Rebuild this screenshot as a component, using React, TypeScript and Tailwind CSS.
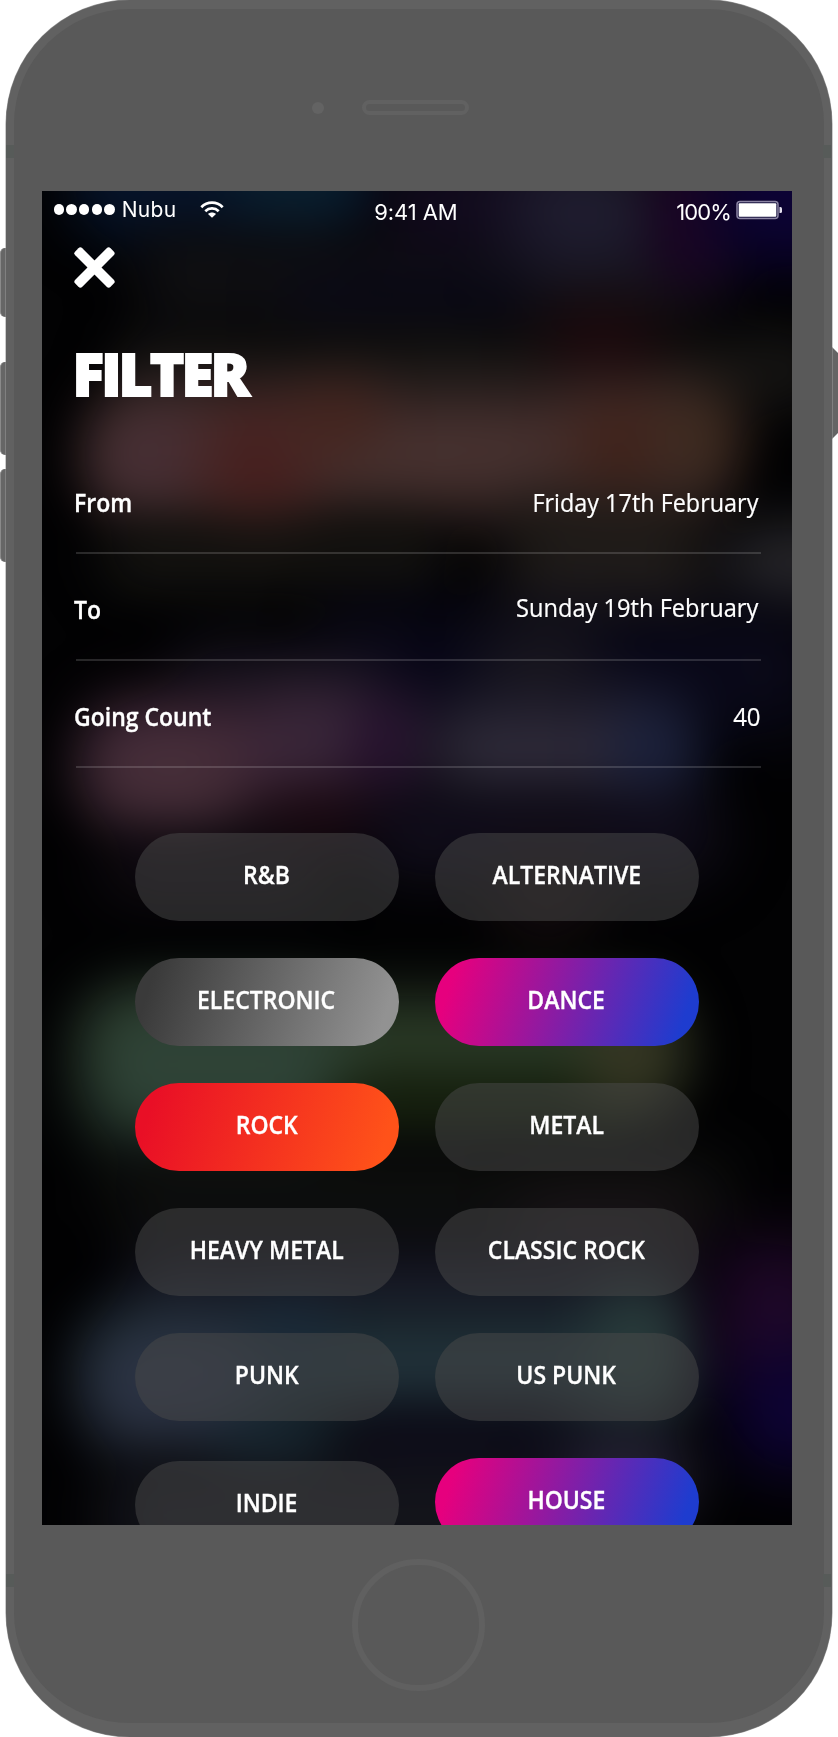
type Filter = { label: string; value: string; valueClass: string };

const filters: Filter[] = [
  { label: "From", value: "Friday 17th February", valueClass: "mt-[41px] mr-[2px] scale-x-[0.936]" },
  { label: "To", value: "Sunday 19th February", valueClass: "mt-[39px] mr-[2px] scale-x-[0.945]" },
  { label: "Going Count", value: "40", valueClass: "mt-[41px] scale-x-[0.960]" },
];

const PLAIN = "bg-[#4a4a4a]/50";
const GREY = "bg-[linear-gradient(108deg,#3a3a3a_8%,#929292_92%)]";
const PINK = "bg-[linear-gradient(108deg,#e6007e_8%,#1e3ccf_92%)]";
const RED = "bg-[linear-gradient(108deg,#e90f26_8%,#ff5219_92%)]";

const leftGenres = [
  { name: "R&B", fill: PLAIN },
  { name: "ELECTRONIC", fill: GREY },
  { name: "ROCK", fill: RED },
  { name: "HEAVY METAL", fill: PLAIN },
  { name: "PUNK", fill: PLAIN },
  { name: "INDIE", fill: `${PLAIN} mt-[3px]` },
];

const rightGenres = [
  { name: "ALTERNATIVE", fill: PLAIN },
  { name: "DANCE", fill: PINK },
  { name: "METAL", fill: PLAIN },
  { name: "CLASSIC ROCK", fill: PLAIN },
  { name: "US PUNK", fill: PLAIN },
  { name: "HOUSE", fill: PINK },
];

/* Soft colour spots behind the content, placed in screen coordinates. */
const glows = [
  "left-[30px] top-[-70px] w-[300px] h-[120px] bg-[#07142a] blur-[24px]",
  "left-[190px] top-[-60px] w-[130px] h-[100px] bg-[#0a2030] blur-[24px]",
  "left-[90px] top-[40px] w-[610px] h-[90px] bg-[#101013] blur-[26px]",
  "left-[240px] top-[85px] w-[260px] h-[50px] bg-[#0a0918] blur-[26px]",
  "left-[340px] top-[-40px] w-[220px] h-[100px] bg-[#120b1e] blur-[24px]",
  "left-[470px] top-[-40px] w-[170px] h-[130px] bg-[#201e30] blur-[34px]",
  "left-[610px] top-[-50px] w-[80px] h-[150px] bg-[#1c0524] blur-[24px]",
  "left-[670px] top-[-80px] w-[160px] h-[155px] bg-[#0c0334] blur-[28px]",
  "left-[70px] top-[140px] w-[720px] h-[80px] bg-[#151413] blur-[22px]",
  "left-[500px] top-[110px] w-[120px] h-[90px] bg-[#1e0b0f] blur-[28px]",
  "left-[50px] top-[200px] w-[630px] h-[125px] bg-[#46312f] blur-[26px]",
  "left-[55px] top-[220px] w-[120px] h-[95px] bg-[#472f35] blur-[26px]",
  "left-[160px] top-[215px] w-[110px] h-[130px] bg-[#482120] blur-[28px]",
  "left-[250px] top-[195px] w-[90px] h-[65px] bg-[#46241d] blur-[26px]",
  "left-[530px] top-[205px] w-[100px] h-[115px] bg-[#42241c] blur-[28px]",
  "left-[620px] top-[200px] w-[75px] h-[95px] bg-[#3f2c20] blur-[26px]",
  "left-[60px] top-[330px] w-[350px] h-[70px] bg-[#151411] blur-[24px]",
  "left-[460px] top-[305px] w-[210px] h-[140px] bg-[#211d1a] blur-[30px]",
  "left-[680px] top-[335px] w-[140px] h-[80px] bg-[#29282c] blur-[26px]",
  "left-[280px] top-[415px] w-[500px] h-[130px] bg-[#0a0919] blur-[30px]",
  "left-[130px] top-[455px] w-[220px] h-[70px] bg-[#171420] blur-[28px]",
  "left-[440px] top-[430px] w-[120px] h-[80px] bg-[#19171e] blur-[28px]",
  "left-[45px] top-[510px] w-[270px] h-[110px] bg-[#41283a] blur-[28px]",
  "left-[50px] top-[540px] w-[160px] h-[95px] bg-[#472f39] blur-[28px]",
  "left-[220px] top-[505px] w-[130px] h-[95px] bg-[#3a283b] blur-[28px]",
  "left-[310px] top-[505px] w-[80px] h-[110px] bg-[#2a1432] blur-[26px]",
  "left-[385px] top-[512px] w-[240px] h-[100px] bg-[#302c3b] blur-[28px]",
  "left-[570px] top-[510px] w-[85px] h-[110px] bg-[#1c2340] blur-[28px]",
  "left-[210px] top-[600px] w-[130px] h-[55px] bg-[#1c0a12] blur-[26px]",
  "left-[320px] top-[605px] w-[360px] h-[80px] bg-[#120e1d] blur-[28px]",
  "left-[60px] top-[650px] w-[220px] h-[55px] bg-[#120c14] blur-[26px]",
  "left-[450px] top-[660px] w-[110px] h-[90px] bg-[#140c0e] blur-[26px]",
  "left-[50px] top-[805px] w-[580px] h-[100px] bg-[#2c3c28] blur-[28px]",
  "left-[45px] top-[808px] w-[260px] h-[148px] bg-[#2f4337] blur-[30px]",
  "left-[290px] top-[885px] w-[310px] h-[55px] bg-[#18230f] blur-[24px]",
  "left-[545px] top-[805px] w-[90px] h-[115px] bg-[#363623] blur-[26px]",
  "left-[60px] top-[965px] w-[640px] h-[80px] bg-[#0f100f] blur-[28px]",
  "left-[470px] top-[1000px] w-[190px] h-[85px] bg-[#1a1417] blur-[28px]",
  "left-[80px] top-[1055px] w-[560px] h-[80px] bg-[#171724] blur-[26px]",
  "left-[50px] top-[1120px] w-[590px] h-[110px] bg-[#22333b] blur-[28px]",
  "left-[45px] top-[1135px] w-[180px] h-[125px] bg-[#2c3344] blur-[28px]",
  "left-[210px] top-[1110px] w-[80px] h-[70px] bg-[#1a2a3a] blur-[26px]",
  "left-[550px] top-[1095px] w-[100px] h-[125px] bg-[#2a3d3c] blur-[28px]",
  "left-[170px] top-[1225px] w-[130px] h-[60px] bg-[#1a2d38] blur-[24px]",
  "left-[300px] top-[1220px] w-[230px] h-[80px] bg-[#0d0b1a] blur-[26px]",
  "left-[670px] top-[1050px] w-[130px] h-[150px] bg-[#20082a] blur-[32px]",
  "left-[690px] top-[1160px] w-[130px] h-[120px] bg-[#0e0336] blur-[30px]",
  "left-[510px] top-[1240px] w-[140px] h-[90px] bg-[#252236] blur-[26px]",
  "left-[60px] top-[1270px] w-[440px] h-[110px] bg-[#14151c] blur-[28px]",
];

function Genre({ name, fill }: { name: string; fill: string }) {
  return (
    <button className={`flex h-[88px] w-[264px] shrink-0 items-center justify-center rounded-full pb-[6px] ${fill}`}>
      <span className="block scale-x-[0.92] text-[25px] leading-7 font-semibold whitespace-nowrap [-webkit-text-stroke:0.35px_white]">
        {name}
      </span>
    </button>
  );
}

function StatusBar() {
  return (
    <div className="flex h-14 items-start pl-[12px] font-['Inter',sans-serif] text-[22px] leading-6">
      <div className="mt-[13px] flex gap-[2.2px]">
        {[0, 1, 2, 3, 4].map((i) => (
          <span key={i} className="size-[10.5px] rounded-full bg-white" />
        ))}
      </div>
      <span className="mt-[7px] ml-[7px] w-[60px] text-[21px] tracking-[0.3px]">Nubu</span>
      <svg className="mt-[9.5px] ml-[18.5px] h-[18px] w-6" viewBox="0 0 24 18" fill="none" stroke="#fff" strokeWidth="2.7">
        <path d="M1.3 6.2C7.3.2 16.7.2 22.7 6.2" />
        <path d="M5.3 10.2C9.1 6.5 14.9 6.5 18.7 10.2" />
        <path d="M12 16.8L8 12.9C10.3 10.9 13.7 10.9 16 12.9Z" fill="#fff" stroke="none" />
      </svg>
      <span className="mt-[9px] ml-[150px] w-[90px] tracking-[-0.1px] whitespace-nowrap">9:41 AM</span>
      <span className="mt-[9px] ml-[212px] w-[60px] tracking-[-0.9px]">100%</span>
      <svg className="mt-[9px] h-5 w-[46px] shrink-0" viewBox="0 0 46 20">
        <rect x="1" y="1.5" width="41" height="17" rx="3" fill="#1a1440" stroke="#8b84a3" strokeWidth="1.5" />
        <rect x="2.7" y="3.2" width="37.6" height="13.6" rx="1" fill="#fff" />
        <path d="M43.5 7H44.5Q46 7 46 8.5V11.5Q46 13 44.5 13H43.5Z" fill="#e4e1ee" />
      </svg>
    </div>
  );
}

function Screen() {
  return (
    <main className="relative ml-[27.5px] h-[1334px] w-[750px] overflow-hidden bg-[#020203] text-white">
      <div className="absolute inset-0 blur-[14px]" aria-hidden="true">
        {glows.map((g) => (
          <div key={g} className={`absolute rounded-[40px] ${g}`} />
        ))}
      </div>
      <div className="relative flex flex-col">
        <StatusBar />
        <button className="ml-8 size-[41px]" aria-label="Close">
          <svg viewBox="0 0 41 41" className="size-[41px]" fill="#fff">
            <rect x="-4.5" y="15.5" width="50" height="10" rx="2.8" transform="rotate(45 20.5 20.5)" />
            <rect x="-4.5" y="15.5" width="50" height="10" rx="2.8" transform="rotate(-45 20.5 20.5)" />
          </svg>
        </button>
        <h1 className="mt-[54.5px] mb-[0.5px] ml-[31px] text-[58.5px] leading-[60px] font-extrabold tracking-[-2.9px] [-webkit-text-stroke:1.8px_white]">
          FILTER
        </h1>
        <div className="mt-[44px] mr-[31px] ml-[34px] flex flex-col text-[25px] leading-7">
          {filters.map((f) => (
            <div key={f.label} className="flex h-[107px] items-start justify-between border-b-2 border-white/15">
              <span className="mt-[41px] -ml-[1.5px] origin-left scale-x-[0.92] font-semibold [-webkit-text-stroke:0.35px_white]">
                {f.label}
              </span>
              <span className={`origin-right [-webkit-text-stroke:0.2px_white] ${f.valueClass}`}>{f.value}</span>
            </div>
          ))}
        </div>
        <div className="mt-[65px] ml-[93px] flex h-[692px] gap-9 overflow-hidden">
          {[leftGenres, rightGenres].map((column, i) => (
            <div key={i} className="flex flex-col gap-[37px]">
              {column.map((g) => (
                <Genre key={g.name} name={g.name} fill={g.fill} />
              ))}
            </div>
          ))}
        </div>
      </div>
    </main>
  );
}

export default function App() {
  return (
    <div className="relative h-[1737px] w-[838px] overflow-hidden bg-white font-['Open_Sans',sans-serif]">
      <div className="absolute top-[248px] left-0 h-[69px] w-4 rounded-l-[5px] border-l border-[#8a8a8a] bg-[#666]" />
      <div className="absolute top-[362px] left-0 h-[93px] w-4 rounded-l-[5px] border-l border-[#8a8a8a] bg-[#666]" />
      <div className="absolute top-[469px] left-0 h-[93px] w-4 rounded-l-[5px] border-l border-[#8a8a8a] bg-[#666]" />
      <div className="absolute top-[347px] right-0 h-[92px] w-[6px] bg-[#646464] [clip-path:polygon(0_0,100%_6px,100%_86px,0_100%)]" />

      <div className="relative ml-[6px] h-[1737px] w-[825.5px] rounded-[124px] border-x-[8.5px] border-t-[9px] border-b-[14px] border-[#616161] bg-[#595959] shadow-[0_0_0_0.5px_#999]">
        <div className="flex h-[182px] items-start pt-[91px] pl-[297.5px]">
          <span className="mt-[1.5px] size-[12.5px] rounded-full bg-[#636363]" />
          <span className="ml-[38px] h-[15px] w-[107px] rounded-full border-4 border-[#616161]" />
        </div>
        <Screen />
        <div className="mt-[34px] ml-[338px] h-[132px] w-[133px] rounded-full border-[6.5px] border-[#606060]" />
      </div>

      <span className="absolute top-[145px] left-[6px] h-[13px] w-[8px] bg-[#575b59]" />
      <span className="absolute top-[145px] right-[7px] h-[13px] w-[8px] bg-[#575b59]" />
      <span className="absolute top-[1574px] left-[6px] h-[13px] w-[8px] bg-[#575b59]" />
      <span className="absolute top-[1574px] right-[7px] h-[13px] w-[8px] bg-[#575b59]" />
    </div>
  );
}
